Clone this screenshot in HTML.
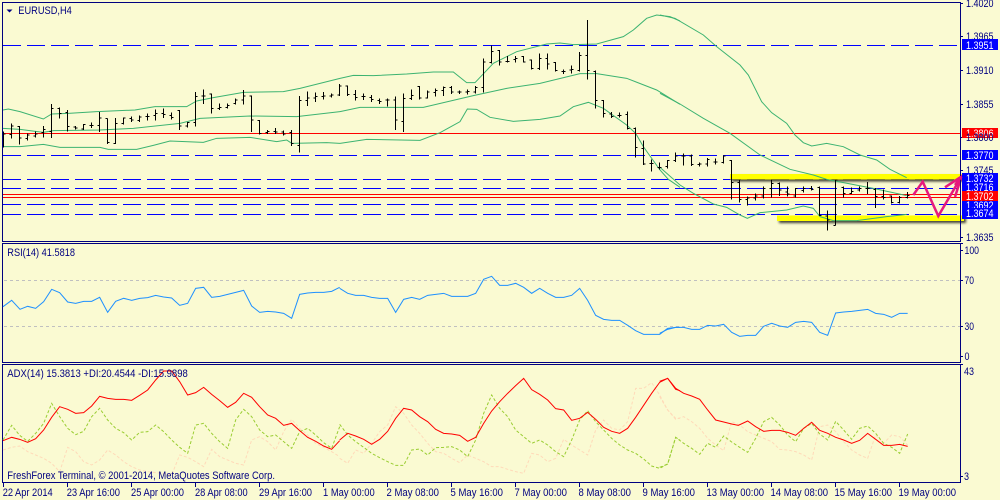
<!DOCTYPE html>
<html><head><meta charset="utf-8"><style>
html,body{margin:0;padding:0;background:#fafad2}
svg{display:block}
polyline,path,line,rect.s{vector-effect:non-scaling-stroke}
text{font-family:"Liberation Sans",sans-serif;font-size:11px;fill:#000080}
.w text,text.w{fill:#fff}
.l{fill:none;shape-rendering:crispEdges}
.g{fill:none;stroke:#3cb371;stroke-width:1}
.b{fill:none;stroke:#1e90ff;stroke-width:1}
.r{fill:none;stroke:#f00;stroke-width:1}
.y{fill:none;stroke:#9acd32;stroke-width:1;stroke-dasharray:3 2}
.p{fill:none;stroke:#ffdab9;stroke-width:1;stroke-dasharray:3 2}
</style></head><body>
<svg xmlns="http://www.w3.org/2000/svg" width="1000" height="500" viewBox="0 0 1000 500">
<defs><filter id="sh" x="-5%" y="-100%" width="110%" height="400%"><feDropShadow dx="2" dy="2" stdDeviation="1.4" flood-color="#000" flood-opacity=".75"/></filter></defs>
<rect width="1000" height="500" fill="#fafad2"/>

<g class="l" stroke="#00f" stroke-dasharray="18 6">
<path d="M3 45.5H960M3 155.5H960M3 179.5H960M3 188.5H960M3 204.5H960M3 214.5H960"/>
</g>
<path class="l" stroke="#f00" d="M3 133.5H960M3 194.5H960M3 197.5H960"/>

<g fill="#ff0" filter="url(#sh)">
<rect x="730" y="174" width="232" height="5.5"/>
<rect x="777" y="215.5" width="187" height="5.5"/>
</g>

<!-- bands -->
<g transform="scale(.33333)" class="g">
<polyline points="9,330 25,327 60,335 130,357 155,342 205,340 290,335 405,330 465,320 560,320 590,303 640,293 730,277 850,275 900,265 1020,235"/>
<polyline points="9,385 60,388 130,397 160,392 300,390 400,385 540,370 600,355 750,348 890,350 1020,335"/>
<polyline points="9,440 60,440 130,433 180,442 300,442 325,448 410,448 460,436 510,423 610,427 650,415 750,412 830,425 860,420 875,430 980,428 1020,430"/>
</g>
<g transform="translate(340 0) scale(.33333)" class="g">
<polyline points="0,235 40,226 100,227 200,222 280,216 340,216 380,248 405,248 460,190 530,155 620,132 660,129 700,134 770,132 850,110 880,90 920,55 950,45 990,50 1020,63"/>
<polyline points="0,335 60,322 250,322 400,287 500,265 600,250 720,221 770,221 860,235 950,270 1020,313"/>
<polyline points="0,430 80,418 240,421 300,398 360,365 382,327 410,328 450,352 520,364 600,358 660,348 700,320 745,307 790,325 860,375 887,400 910,440 960,510 985,538 1020,562"/>
</g>
<g transform="translate(660 0) scale(.33333)" class="g">
<polyline points="0,45 45,55 130,105 170,140 240,195 265,225 305,305 335,338 380,370 405,405 430,428 455,438 500,430 550,440 600,465 650,480 690,508 740,533"/>
<polyline points="0,280 60,312 130,355 210,400 300,465 390,508 460,525 500,538 640,565 740,587"/>
</g>
<g transform="translate(660 130) scale(.33333)" class="g">
<polyline points="0,112 60,165 100,190 160,222 200,232 240,255 262,265 300,248 380,240 430,228 460,235 480,260 520,272 590,272 680,260 740,253"/>
</g>

<!-- bars -->
<g transform="scale(1 .33333)"><path class="l" stroke="#000" stroke-width="1" d="
M3.5 394V442M3.5 402H5.5
M11.5 370V415M9.5 403H11.5M11.5 378H13.5
M19.5 378V434M17.5 380H19.5M19.5 414H21.5
M27.5 400V422M25.5 415H27.5M27.5 405H29.5
M35.5 395V412M33.5 408H35.5M35.5 402H37.5
M43.5 378V412M41.5 398H43.5M43.5 388H45.5
M51.5 312V414M49.5 395H51.5M51.5 325H53.5
M59.5 322V356M57.5 325H59.5M59.5 340H61.5
M67.5 330V395M65.5 338H67.5M67.5 380H69.5
M75.5 378V388M73.5 381H75.5M75.5 384H77.5
M83.5 372V390M81.5 387H83.5M83.5 373H85.5
M91.5 368V384M89.5 376H91.5M91.5 376H93.5
M99.5 336V396M97.5 376H99.5M99.5 354H101.5
M107.5 355V432M105.5 356H107.5M107.5 428H109.5
M115.5 354V432M113.5 430H115.5M115.5 370H117.5
M123.5 352V374M121.5 370H123.5M123.5 354H125.5
M131.5 350V366M129.5 356H131.5M131.5 360H133.5
M139.5 347V366M137.5 362H139.5M139.5 351H141.5
M147.5 341V362M145.5 350H147.5M147.5 350H149.5
M155.5 328V362M153.5 346H155.5M155.5 340H157.5
M163.5 326V354M161.5 340H163.5M163.5 344H165.5
M171.5 337V358M169.5 346H171.5M171.5 352H173.5
M179.5 330V390M177.5 332H179.5M179.5 378H181.5
M187.5 366V382M185.5 378H187.5M187.5 368H189.5
M195.5 276V380M193.5 368H195.5M195.5 290H197.5
M203.5 268V312M201.5 288H203.5M203.5 288H205.5
M211.5 280V341M209.5 282H211.5M211.5 326H213.5
M219.5 310V330M217.5 326H219.5M219.5 322H221.5
M227.5 310V326M225.5 322H227.5M227.5 316H229.5
M235.5 295V314M233.5 310H235.5M235.5 300H237.5
M243.5 270V314M241.5 300H243.5M243.5 288H245.5
M251.5 286V396M249.5 288H251.5M251.5 360H253.5
M259.5 360V404M257.5 362H259.5M259.5 400H261.5
M267.5 390V402M265.5 398H267.5M267.5 394H269.5
M275.5 384V402M273.5 394H275.5M275.5 396H277.5
M283.5 392V406M281.5 396H283.5M283.5 402H285.5
M291.5 390V438M289.5 398H291.5M291.5 430H293.5
M299.5 288V458M297.5 436H299.5M299.5 302H301.5
M307.5 274V318M305.5 302H307.5M307.5 294H309.5
M315.5 278V306M313.5 294H315.5M315.5 290H317.5
M323.5 276V298M321.5 290H323.5M323.5 288H325.5
M331.5 280V292M329.5 288H331.5M331.5 285H333.5
M339.5 252V288M337.5 285H339.5M339.5 258H341.5
M347.5 256V288M345.5 258H347.5M347.5 284H349.5
M355.5 270V302M353.5 284H355.5M355.5 292H357.5
M363.5 280V300M361.5 290H363.5M363.5 290H365.5
M371.5 285V306M369.5 292H371.5M371.5 298H373.5
M379.5 296V312M377.5 302H379.5M379.5 304H381.5
M387.5 296V320M385.5 300H387.5M387.5 300H389.5
M395.5 290V390M393.5 300H395.5M395.5 360H397.5
M403.5 280V396M401.5 364H403.5M403.5 296H405.5
M411.5 268V300M409.5 296H411.5M411.5 286H413.5
M419.5 258V298M417.5 260H419.5M419.5 294H421.5
M427.5 272V296M425.5 294H427.5M427.5 276H429.5
M435.5 266V290M433.5 278H435.5M435.5 272H437.5
M443.5 260V288M441.5 272H443.5M443.5 262H445.5
M451.5 258V282M449.5 262H451.5M451.5 276H453.5
M459.5 272V282M457.5 276H459.5M459.5 276H461.5
M467.5 268V284M465.5 276H467.5M467.5 274H469.5
M475.5 258V280M473.5 276H475.5M475.5 262H477.5
M483.5 175V278M481.5 262H483.5M483.5 186H485.5
M491.5 137V190M489.5 188H491.5M491.5 155H493.5
M499.5 150V197M497.5 152H499.5M499.5 186H501.5
M507.5 168V188M505.5 184H507.5M507.5 184H509.5
M515.5 168V188M513.5 178H515.5M515.5 176H517.5
M523.5 168V188M521.5 170H523.5M523.5 186H525.5
M531.5 178V208M529.5 180H531.5M531.5 206H533.5
M539.5 160V210M537.5 206H539.5M539.5 176H541.5
M547.5 160V208M545.5 176H547.5M547.5 192H549.5
M555.5 186V214M553.5 188H555.5M555.5 212H557.5
M563.5 208V222M561.5 214H563.5M563.5 214H565.5
M571.5 196V220M569.5 210H571.5M571.5 208H573.5
M579.5 156V214M577.5 212H579.5M579.5 166H581.5
M587.5 60V238M585.5 166H587.5M587.5 212H589.5
M595.5 212V326M593.5 214H595.5M595.5 302H597.5
M603.5 300V352M601.5 302H603.5M603.5 340H605.5
M611.5 336V354M609.5 342H611.5M611.5 350H613.5
M619.5 338V352M617.5 346H619.5M619.5 346H621.5
M627.5 334V388M625.5 344H627.5M627.5 386H629.5
M635.5 382V472M633.5 386H635.5M635.5 442H637.5
M643.5 422V495M641.5 445H643.5M643.5 492H645.5
"/></g>
<g transform="translate(0 130) scale(1 .33333)"><path class="l" stroke="#000" stroke-width="1" d="
M651.5 88V125M649.5 100H651.5M651.5 100H653.5
M659.5 97V118M657.5 112H659.5M659.5 112H661.5
M667.5 90V116M665.5 110H667.5M667.5 92H669.5
M675.5 68V96M673.5 92H675.5M675.5 78H677.5
M683.5 70V106M681.5 78H683.5M683.5 78H685.5
M691.5 74V108M689.5 78H691.5M691.5 104H693.5
M699.5 98V110M697.5 104H699.5M699.5 102H701.5
M707.5 84V110M705.5 102H707.5M707.5 88H709.5
M715.5 86V104M713.5 96H715.5M715.5 96H717.5
M723.5 76V100M721.5 98H723.5M723.5 78H725.5
M731.5 90V208M729.5 92H731.5M731.5 158H733.5
M739.5 148V218M737.5 158H739.5M739.5 208H741.5
M747.5 200V226M745.5 208H747.5M747.5 204H749.5
M755.5 190V212M753.5 204H755.5M755.5 198H757.5
M763.5 170V206M761.5 198H763.5M763.5 176H765.5
M771.5 148V202M769.5 176H771.5M771.5 160H773.5
M779.5 158V198M777.5 160H779.5M779.5 180H781.5
M787.5 170V200M785.5 186H787.5M787.5 192H789.5
M795.5 174V202M793.5 198H795.5M795.5 176H797.5
M803.5 170V188M801.5 182H803.5M803.5 176H805.5
M811.5 168V182M809.5 176H811.5M811.5 178H813.5
M819.5 170V258M817.5 172H819.5M819.5 256H821.5
M827.5 242V302M825.5 258H827.5M827.5 270H829.5
M835.5 148V286M833.5 286H835.5M835.5 150H837.5
M843.5 170V202M841.5 172H843.5M843.5 190H845.5
M851.5 172V192M849.5 190H851.5M851.5 184H853.5
M859.5 170V184M857.5 180H859.5M859.5 176H861.5
M867.5 156V192M865.5 176H867.5M867.5 176H869.5
M875.5 174V234M873.5 178H875.5M875.5 200H877.5
M883.5 178V208M881.5 200H883.5M883.5 202H885.5
M891.5 196V220M889.5 198H891.5M891.5 218H893.5
M899.5 198V220M897.5 218H899.5M899.5 202H901.5
M907.5 186V206M905.5 202H907.5M907.5 196H909.5
"/></g>

<!-- pink arrow -->
<g fill="none" stroke="#e6197d" stroke-width="2.5" stroke-linejoin="miter">
<polyline points="913.3,195 922.7,181.7 938.3,216 961.5,176.5"/>
<polyline points="945,187.3 961.5,176.5 955,197"/>
</g>

<!-- frames -->
<g fill="none" stroke="#000080" stroke-width="1" shape-rendering="crispEdges">
<rect x="2.5" y="2.5" width="958" height="239"/>
<rect x="2.5" y="243.5" width="958" height="119"/>
<rect x="2.5" y="364.5" width="958" height="118"/>
<path d="M961 3.5H963M961 36.5H963M961 70.5H963M961 104.5H963M961 137.5H963M961 170.5H963M961 237.5H963M961 243.5H963M961 250.5H963M961 280.5H963M961 326.5H963M961 356.5H963M961 364.5H963M961 476.5H963"/>
<path d="M3.5 483V487M67.5 483V487M131.5 483V487M195.5 483V487M259.5 483V487M323.5 483V487M387.5 483V487M451.5 483V487M515.5 483V487M579.5 483V487M643.5 483V487M707.5 483V487M771.5 483V487M835.5 483V487M899.5 483V487"/>
</g>

<!-- RSI -->
<path class="l" stroke="#c0c0c0" stroke-dasharray="3 3" d="M4 280.5H960M4 326.5H960"/>
<g transform="translate(0 240) scale(.33333)" class="b"><polyline points="9,200 35,181 60,208 83,199 107,205 131,185 155,148 179,158 203,186 227,190 251,184 275,184 299,172 323,217 347,184 371,175 395,181 419,175 443,173 467,166 491,171 515,174 539,196 563,190 587,145 611,142 635,172 659,169 683,163 707,157 731,151 755,198 779,217 803,214 827,216 851,220 875,235 899,163 923,159 947,157 971,157 995,154 1019,142"/></g>
<g transform="translate(340 240) scale(.33333)" class="b"><polyline points="-1,145 23,160 47,166 71,166 95,172 119,175 143,175 167,217 191,178 215,172 239,178 263,166 287,163 311,160 335,169 359,169 383,169 407,160 431,118 455,109 479,136 503,136 527,130 551,142 575,160 599,145 623,160 647,172 671,172 695,166 719,145 743,181 767,226 791,238 815,241 839,241 863,256 887,272 911,283 935,283 959,283 983,265 1007,262 1020,262"/></g>
<g transform="translate(660 240) scale(.33333)" class="b"><polyline points="-1,280 23,268 47,262 71,262 95,268 119,268 143,256 167,258 191,253 215,277 239,289 263,286 287,286 311,259 335,250 359,258 383,262 407,247 431,244 455,247 479,277 503,286 527,219 551,216 575,214 599,211 623,208 647,220 671,223 695,232 719,220 743,220"/></g>

<!-- ADX peach -->
<g transform="translate(0 360) scale(.33333)" class="p"><polyline points="9,270 35,262 59,258 83,275 107,285 131,295 155,310 179,335 203,262 227,275 251,305 275,315 299,300 323,270 347,285 371,305 395,320 419,330 443,335 467,338 491,340 515,345 539,285 563,292 587,305 611,320 635,268 659,290 683,300 707,310 731,315 755,240 779,230 803,245 827,270 851,215 875,178 899,205 923,225 947,250 971,262 995,275 1019,290"/></g>
<g transform="translate(340 360) scale(.33333)" class="p"><polyline points="-1,295 23,310 47,270 71,280 95,250 119,215 143,195 167,140 191,160 215,195 239,220 263,250 287,275 311,280 335,295 359,308 383,285 407,295 431,305 455,320 479,320 503,328 527,335 551,340 575,280 599,285 623,305 647,295 671,238 695,255 719,270 743,285 767,210 791,180 815,205 839,210 863,185 887,85 911,85 935,68 959,105 983,150 1007,175 1020,175"/></g>
<g transform="translate(660 360) scale(.33333)" class="p"><polyline points="-1,110 23,150 47,178 71,170 95,185 119,205 143,235 167,255 191,272 215,185 239,195 263,215 287,225 311,235 335,245 359,268 383,270 407,275 431,285 455,300 479,200 503,195 527,215 551,245 575,270 599,285 623,295 647,225 671,250 695,225 719,230 743,255"/></g>
<!-- ADX green -->
<g transform="translate(0 360) scale(.33333)" class="y"><polyline points="9,240 35,196 59,226 83,244 107,220 131,190 155,130 179,170 203,205 227,224 251,214 275,170 299,145 323,180 347,205 371,218 395,240 419,217 443,215 467,195 491,215 515,240 539,262 563,280 587,195 611,190 635,220 659,245 683,265 707,180 731,148 755,170 779,210 803,230 827,225 851,245 875,265 899,215 923,205 947,225 971,248 995,265 1019,200"/></g>
<g transform="translate(340 360) scale(.33333)" class="y"><polyline points="-1,193 23,225 47,245 71,262 95,280 119,293 143,305 167,316 191,316 215,270 239,267 263,285 287,263 311,262 335,260 359,270 383,290 407,240 431,160 455,105 479,145 503,170 527,210 551,230 575,250 599,240 623,255 647,275 671,290 695,240 719,180 743,152 767,185 791,210 815,235 839,255 863,270 887,280 911,297 935,318 959,325 983,312 1007,232 1020,240"/></g>
<g transform="translate(660 360) scale(.33333)" class="y"><polyline points="-1,322 23,312 47,232 71,250 95,265 119,283 143,250 167,262 191,228 215,246 239,262 263,277 287,235 311,185 335,172 359,195 383,225 407,245 431,205 455,190 479,222 503,240 527,184 551,210 575,238 599,205 623,198 647,220 671,250 695,262 719,280 743,222"/></g>
<!-- ADX red -->
<g transform="translate(0 360) scale(.33333)" class="r"><polyline points="9,242 35,232 59,238 83,247 107,236 131,210 155,172 179,140 203,148 227,160 251,158 275,138 299,109 323,115 347,118 371,118 395,121 419,106 443,90 467,60 491,33 515,33 539,65 563,105 587,98 611,82 635,103 659,122 683,142 707,127 731,100 755,112 779,140 803,165 827,175 851,196 875,190 899,212 923,232 947,244 971,258 995,268 1019,242"/></g>
<g transform="translate(340 360) scale(.33333)" class="r"><polyline points="-1,240 23,220 47,228 71,238 95,253 119,238 143,214 167,175 191,145 215,150 239,170 263,185 287,208 311,220 335,222 359,226 383,244 407,232 431,190 455,153 479,125 503,100 527,77 551,55 575,89 599,103 623,120 647,146 671,150 695,181 719,175 743,157 767,178 791,202 815,214 839,220 863,205 887,172 911,136 935,100 959,67 983,55 1007,88 1020,92"/></g>
<g transform="translate(660 360) scale(.33333)" class="r"><polyline points="-1,64 23,55 47,85 71,100 95,108 119,118 143,150 167,180 191,186 215,192 235,196 263,183 287,200 311,214 335,211 359,211 383,217 407,226 431,205 455,187 479,211 503,220 527,232 551,240 575,250 599,241 623,220 647,238 671,256 695,256 719,253 743,259"/></g>

<!-- panel text -->
<path d="M6.5 9.5H12.5L9.5 12.5Z" fill="#000080"/>
<text x="18.3" y="14" textLength="53.5" lengthAdjust="spacingAndGlyphs">EURUSD,H4</text>
<text x="7.3" y="256" textLength="67.7" lengthAdjust="spacingAndGlyphs">RSI(14) 41.5818</text>
<text x="7.3" y="377" textLength="180.5" lengthAdjust="spacingAndGlyphs">ADX(14) 15.3813 +DI:20.4544 -DI:15.9898</text>
<text x="7.3" y="479" textLength="267.7" lengthAdjust="spacingAndGlyphs">FreshForex Terminal, © 2001-2014, MetaQuotes Software Corp.</text>

<!-- price axis -->
<g>
<text x="966" y="7" textLength="27.5" lengthAdjust="spacingAndGlyphs">1.4020</text>
<text x="966" y="40" textLength="27.5" lengthAdjust="spacingAndGlyphs">1.3965</text>
<text x="966" y="74" textLength="27.5" lengthAdjust="spacingAndGlyphs">1.3910</text>
<text x="966" y="108" textLength="27.5" lengthAdjust="spacingAndGlyphs">1.3855</text>
<text x="966" y="174" textLength="27.5" lengthAdjust="spacingAndGlyphs">1.3745</text>
<text x="966" y="241" textLength="27.5" lengthAdjust="spacingAndGlyphs">1.3635</text>
</g>
<rect x="962" y="39" width="36" height="11" fill="#00f"/><text class="w" x="966" y="49" textLength="27.5" lengthAdjust="spacingAndGlyphs">1.3951</text>
<rect x="962" y="128" width="36" height="10" fill="#f00"/><text class="w" x="966" y="137" textLength="27.5" lengthAdjust="spacingAndGlyphs">1.3806</text>
<text x="966" y="141" textLength="27.5" lengthAdjust="spacingAndGlyphs">1.3800</text>
<rect x="962" y="150" width="36" height="10" fill="#00f"/><text class="w" x="966" y="159" textLength="27.5" lengthAdjust="spacingAndGlyphs">1.3770</text>
<rect x="962" y="173" width="36" height="11" fill="#00f"/><text class="w" x="966" y="182" textLength="27.5" lengthAdjust="spacingAndGlyphs">1.3732</text>
<rect x="962" y="182" width="36" height="10" fill="#00f"/><text class="w" x="966" y="191" textLength="27.5" lengthAdjust="spacingAndGlyphs">1.3716</text>
<rect x="962" y="191" width="36" height="10" fill="#f00"/><text class="w" x="966" y="200" textLength="27.5" lengthAdjust="spacingAndGlyphs">1.3702</text>
<rect x="962" y="201" width="36" height="9" fill="#00f"/><text class="w" x="966" y="209" textLength="27.5" lengthAdjust="spacingAndGlyphs">1.3692</text>
<rect x="962" y="208" width="36" height="11" fill="#00f"/><text class="w" x="966" y="217" textLength="27.5" lengthAdjust="spacingAndGlyphs">1.3674</text>

<!-- pink tip over labels -->
<polyline points="955,185 961.5,176.5" fill="none" stroke="#e6197d" stroke-width="2.5"/>

<!-- indicator axes -->
<text x="964.5" y="254" textLength="14.5" lengthAdjust="spacingAndGlyphs">100</text>
<text x="964.5" y="284" textLength="9.5" lengthAdjust="spacingAndGlyphs">70</text>
<text x="964.5" y="330" textLength="9.5" lengthAdjust="spacingAndGlyphs">30</text>
<text x="964.5" y="360" textLength="5" lengthAdjust="spacingAndGlyphs">0</text>
<text x="964" y="375" textLength="10" lengthAdjust="spacingAndGlyphs">43</text>
<text x="964" y="480" textLength="5" lengthAdjust="spacingAndGlyphs">3</text>

<!-- time axis -->
<g>
<text x="2.7" y="496" textLength="50" lengthAdjust="spacingAndGlyphs">22 Apr 2014</text>
<text x="66.7" y="496" textLength="53.3" lengthAdjust="spacingAndGlyphs">23 Apr 16:00</text>
<text x="131" y="496" textLength="53" lengthAdjust="spacingAndGlyphs">25 Apr 00:00</text>
<text x="195" y="496" textLength="52.7" lengthAdjust="spacingAndGlyphs">28 Apr 08:00</text>
<text x="259" y="496" textLength="53" lengthAdjust="spacingAndGlyphs">29 Apr 16:00</text>
<text x="323" y="496" textLength="51.7" lengthAdjust="spacingAndGlyphs">1 May 00:00</text>
<text x="386.5" y="496" textLength="52.5" lengthAdjust="spacingAndGlyphs">2 May 08:00</text>
<text x="450.5" y="496" textLength="52.5" lengthAdjust="spacingAndGlyphs">5 May 16:00</text>
<text x="514.5" y="496" textLength="52.5" lengthAdjust="spacingAndGlyphs">7 May 00:00</text>
<text x="578.5" y="496" textLength="52.5" lengthAdjust="spacingAndGlyphs">8 May 08:00</text>
<text x="642.5" y="496" textLength="52.5" lengthAdjust="spacingAndGlyphs">9 May 16:00</text>
<text x="706.5" y="496" textLength="57.5" lengthAdjust="spacingAndGlyphs">13 May 00:00</text>
<text x="770.5" y="496" textLength="57.5" lengthAdjust="spacingAndGlyphs">14 May 08:00</text>
<text x="834.5" y="496" textLength="57.5" lengthAdjust="spacingAndGlyphs">15 May 16:00</text>
<text x="898.5" y="496" textLength="57.5" lengthAdjust="spacingAndGlyphs">19 May 00:00</text>
</g>
</svg>
</body></html>
